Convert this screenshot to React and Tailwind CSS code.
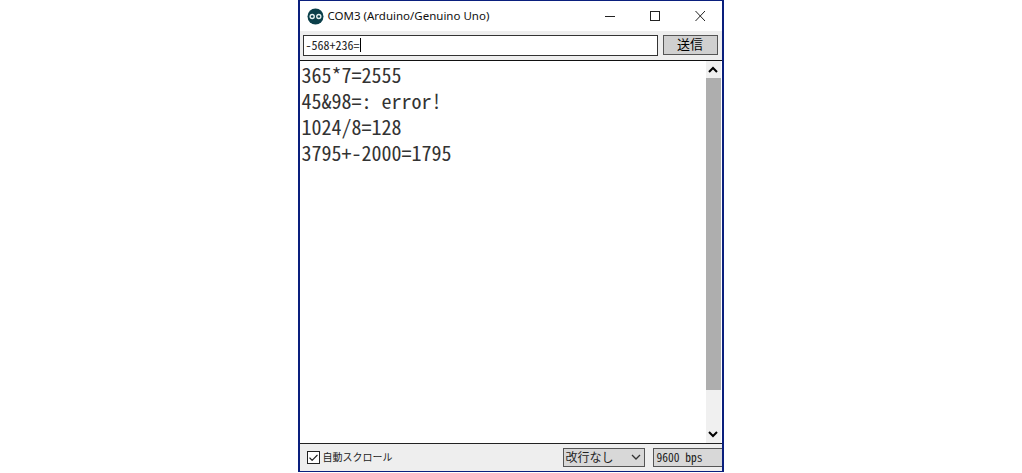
import { Check } from "lucide-react";

const lines = ["365*7=2555", "45&98=: error!", "1024/8=128", "3795+-2000=1795"];

const UI = "font-['Noto_Sans','Noto_Sans_CJK_JP',sans-serif]";
const MONO = "font-['Noto_Sans_Mono_CJK_JP','Liberation_Mono',monospace]";

const ArduinoLogo = () => (
  <svg width="17" height="17" viewBox="0 0 17 17">
    <circle cx="8.5" cy="8.5" r="8" fill="#0b3f4a" />
    <circle cx="5.2" cy="8.5" r="2.7" fill="#e8f2f2" />
    <circle cx="11.8" cy="8.5" r="2.7" fill="#e8f2f2" />
    <circle cx="5.2" cy="8.5" r="1.3" fill="#0b3f4a" />
    <circle cx="11.8" cy="8.5" r="1.3" fill="#0b3f4a" />
  </svg>
);

const Chevron = ({ up, bold }) => (
  <svg width="10" height="7" viewBox="0 0 10 7" fill="none" stroke={bold ? "#000" : "#333"} strokeWidth={bold ? 2 : 1.3}>
    <path d={up ? "M1 6 L5 2 L9 6" : "M1 1 L5 5 L9 1"} />
  </svg>
);

export default function App() {
  return (
    <div className="w-[1022px] h-[473px] bg-white flex justify-center">
      <div className="w-[426px] ml-[-1px] h-[472px] border-x-2 border-y border-[#0a1f7d] bg-white flex flex-col">
        <div className="h-[30px] flex items-center pl-[7px] shrink-0">
          <ArduinoLogo />
          <span className={`ml-[4px] text-[11.5px] text-[#111] ${UI}`}>COM3 (Arduino/Genuino Uno)</span>
          <div className="ml-auto flex items-center mr-[17px]">
            <svg width="100" height="12" viewBox="0 0 100 12" fill="none" stroke="#222" strokeWidth="1">
              <path d="M0 6.5 H10" />
              <rect x="45.5" y="1.5" width="9" height="9" />
              <path d="M90.5 1 L100 11 M100 1 L90.5 11" />
            </svg>
          </div>
        </div>

        <div className="h-[30px] bg-[#eeeeee] flex items-center pb-px pl-[3px] pr-[4px] gap-[5px] shrink-0 border-b border-[#111]">
          <div className={`w-[355px] h-[21px] border border-[#333] bg-white flex items-center pl-[2px] text-[12px] text-[#222] ${MONO}`}>
            -568+236=<span className="w-px h-[14px] bg-black"></span>
          </div>
          <div className={`w-[55px] h-[20px] border border-[#555] bg-[#d0d0d0] flex items-center justify-center text-[13px] text-black ${UI}`}>
            送信
          </div>
        </div>

        <div className="flex-1 min-h-0 flex">
          <div className={`flex-1 pl-[2px] pt-[1px] text-[20px] leading-[26px] text-[#333] whitespace-pre ${MONO}`}>
            {lines.map((line) => (
              <div key={line}>{line}</div>
            ))}
          </div>
          <div className="w-[15px] bg-[#f0f0f0] flex flex-col items-center mr-px">
            <div className="h-[17px] flex items-center justify-center shrink-0">
              <Chevron up bold />
            </div>
            <div className="w-full flex-1 bg-[#aeaeae] mb-[35px]"></div>
            <div className="h-[18px] flex items-center justify-center shrink-0">
              <Chevron bold />
            </div>
          </div>
        </div>

        <div className="h-[28px] bg-[#eeeeee] border-t border-[#222] flex items-center pl-[7px] shrink-0 overflow-hidden">
          <div className="w-[13px] h-[13px] border border-[#222] bg-white flex items-center justify-center">
            <Check size={12} strokeWidth={2.5} className="text-[#222]" />
          </div>
          <span className={`ml-[3px] text-[10px] text-[#222] ${UI}`}>自動スクロール</span>
          <div className={`ml-auto w-[82px] h-[19px] border border-[#555] bg-[#d8d8d8] flex items-center pl-[2px] text-[12px] text-[#222] ${UI}`}>
            改行なし
            <span className="ml-auto mr-[3px] flex">
              <Chevron />
            </span>
          </div>
          <div className={`ml-[8px] mr-[-2px] w-[71px] h-[19px] shrink-0 border border-[#555] bg-[#d8d8d8] flex items-center pl-[3px] text-[11.5px] text-[#222] ${MONO}`}>
            9600 bps
          </div>
        </div>
      </div>
    </div>
  );
}
